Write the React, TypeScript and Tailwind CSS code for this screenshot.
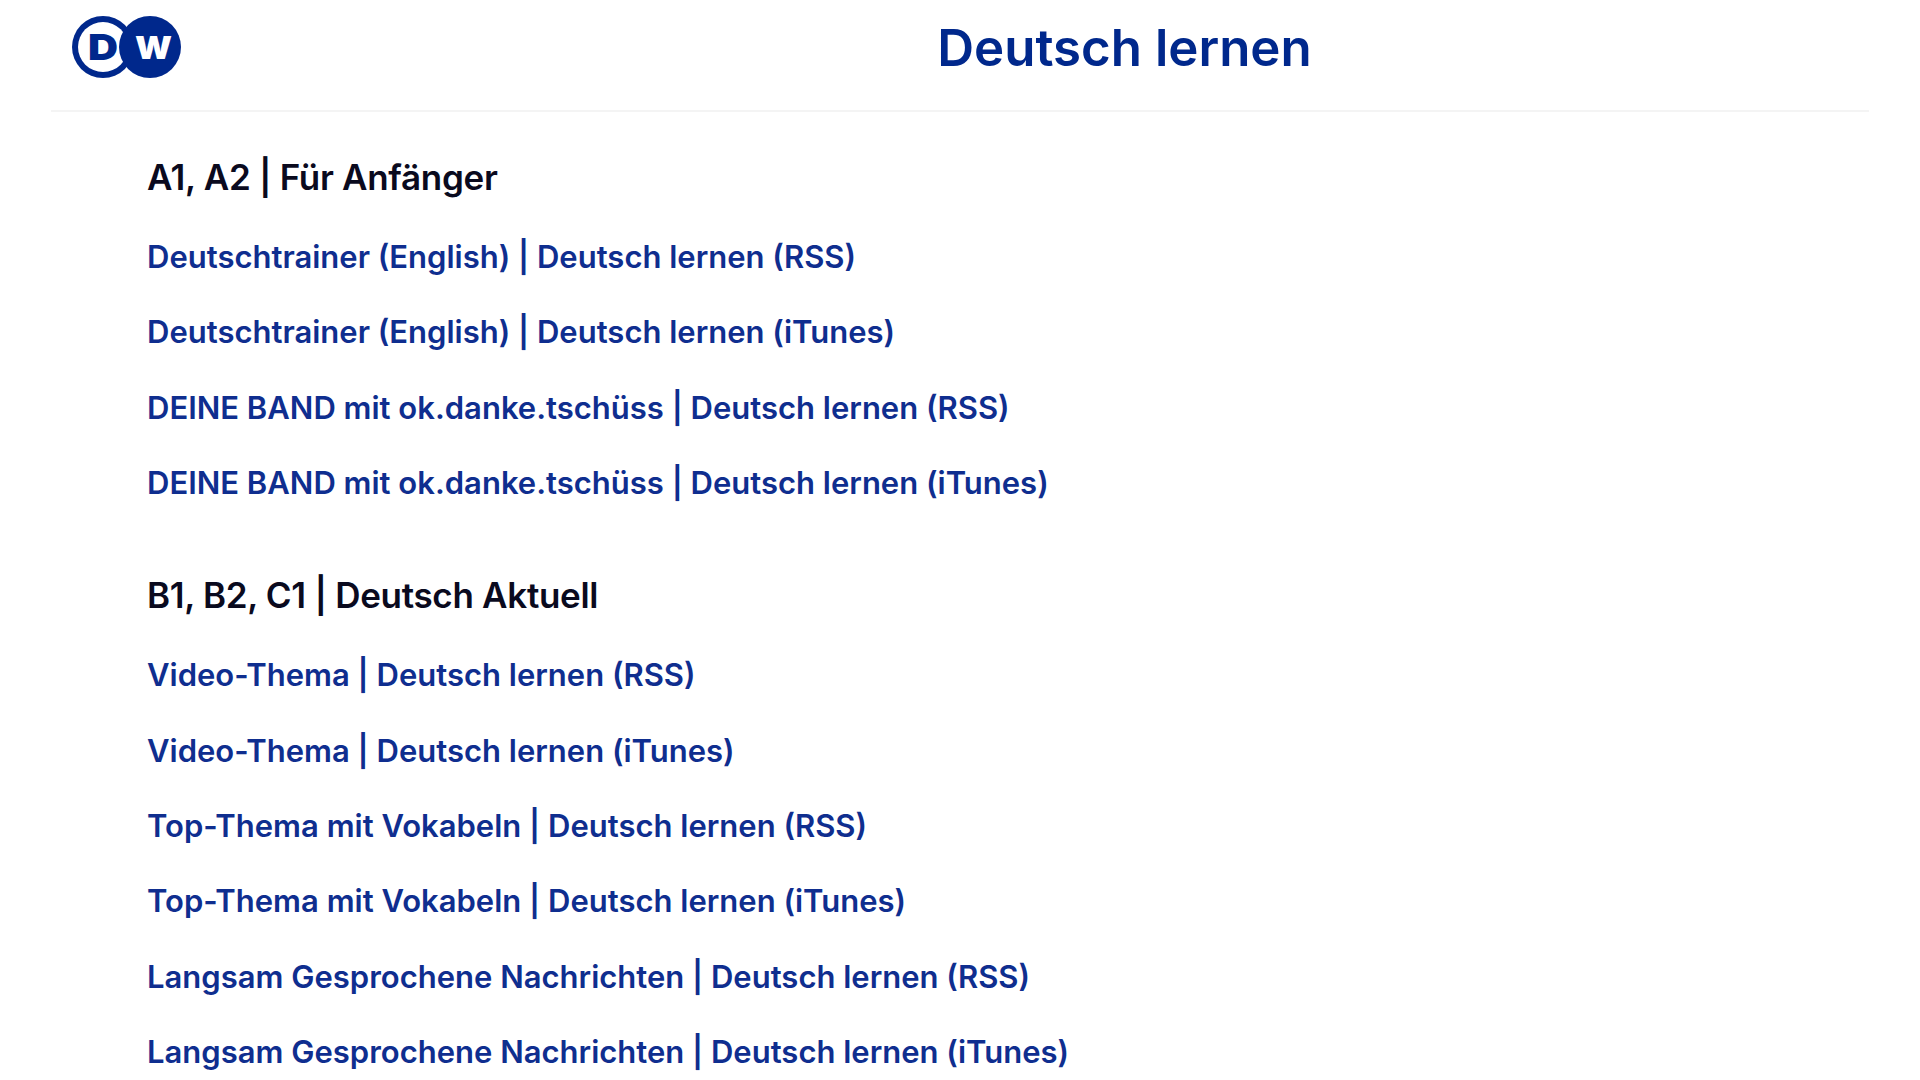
const sections = [
  {
    title: 'A1, A2 | Für Anfänger',
    links: [
      'Deutschtrainer (English) | Deutsch lernen (RSS)',
      'Deutschtrainer (English) | Deutsch lernen (iTunes)',
      'DEINE BAND mit ok.danke.tschüss | Deutsch lernen (RSS)',
      'DEINE BAND mit ok.danke.tschüss | Deutsch lernen (iTunes)',
    ],
  },
  {
    title: 'B1, B2, C1 | Deutsch Aktuell',
    links: [
      'Video-Thema | Deutsch lernen (RSS)',
      'Video-Thema | Deutsch lernen (iTunes)',
      'Top-Thema mit Vokabeln | Deutsch lernen (RSS)',
      'Top-Thema mit Vokabeln | Deutsch lernen (iTunes)',
      'Langsam Gesprochene Nachrichten | Deutsch lernen (RSS)',
      'Langsam Gesprochene Nachrichten | Deutsch lernen (iTunes)',
    ],
  },
]

const Logo = () => (
  <svg width="112" height="64" viewBox="0 0 112 64" aria-label="DW">
    <circle cx="32" cy="32" r="31" fill="#00288c" />
    <circle cx="32" cy="32" r="25" fill="#fff" />
    <circle cx="79" cy="32" r="31" fill="#00288c" />
    <text
      x="17"
      y="45"
      textLength="30"
      lengthAdjust="spacingAndGlyphs"
      fontSize="36"
      fontWeight="900"
      fontFamily="Inter, sans-serif"
      fill="#00288c"
    >
      D
    </text>
    <text
      x="64"
      y="44"
      textLength="37"
      lengthAdjust="spacingAndGlyphs"
      fontSize="32"
      fontWeight="900"
      fontFamily="Inter, sans-serif"
      fill="#fff"
    >
      W
    </text>
  </svg>
)

export default function App() {
  return (
    <div className="h-screen overflow-hidden bg-white font-['Inter',sans-serif]">
      <header className="mx-[51px] flex h-[112px] items-center border-b-2 border-[#f4f4f4]">
        <div className="w-[329px] pl-[20px] pb-[16px]">
          <Logo />
        </div>
        <h1 className="flex-1 pb-[16px] text-center text-[51px] font-semibold leading-none text-[#00288c]">
          Deutsch lernen
        </h1>
      </header>
      <main className="pl-[147px] pt-[40px]">
        {sections.map((section) => (
          <section key={section.title} className="mb-[37px]">
            <h2 className="mb-[30px] text-[35px] font-semibold leading-[50px] tracking-[-0.3px] text-[#0a0a1e]">
              {section.title}
            </h2>
            <ul>
              {section.links.map((link) => (
                <li key={link} className="h-[75.33px]">
                  <a href="#" className="text-[31px] font-semibold leading-[50px] text-[#0f2e8f]">
                    {link}
                  </a>
                </li>
              ))}
            </ul>
          </section>
        ))}
      </main>
    </div>
  )
}
